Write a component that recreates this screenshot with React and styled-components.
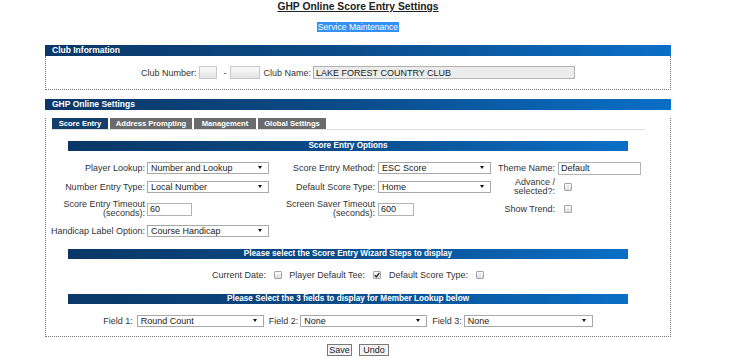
import React from "react";
import styled, { createGlobalStyle } from "styled-components";

// base page styles
const GlobalStyle = createGlobalStyle`
  body {
    margin: 0;
    background: #fff;
    font-family: "Liberation Sans", Arial, sans-serif;
    color: #333;
  }
`;

const FONT = `"Liberation Sans", Arial, sans-serif`;
const BAR = "linear-gradient(to right, #0a3766 0%, #0b4a86 45%, #0a6fc7 100%)";

const Page = styled.div`
  width: 626px;
  margin-left: 45px;
  padding-top: 1px;
`;

const Title = styled.h1`
  margin: 0;
  text-align: center;
  font-size: 10.3px;
  line-height: 12px;
  font-weight: bold;
  text-decoration: underline;
  color: #222;
`;

const ServiceRow = styled.div`
  display: flex;
  justify-content: center;
  margin-top: 9px;
`;

const Highlight = styled.span`
  display: inline-block;
  padding: 0 1px;
  font-size: 8.6px;
  line-height: 10px;
  color: #fff;
  background: #3390f5;
`;

// section (Club Information / GHP Online Settings)
const Section = styled.section`
  margin-top: ${(p) => p.$top}px;
`;

const SectionHeader = styled.div`
  height: 11px;
  line-height: 11px;
  padding-left: 7px;
  background: ${BAR};
  color: #fff;
  font-size: 8.5px;
  font-weight: bold;
`;

const SectionBody = styled.div`
  border: 1px dotted #777;
  border-top: none;
  padding-bottom: ${(p) => p.$pb || 0}px;
`;

const ClubRow = styled.div`
  height: 33px;
  display: flex;
  align-items: center;
  justify-content: center;
  font-size: 9px;
`;

const Text = styled.span`
  font-size: 9px;
  line-height: 10px;
  color: #333;
  margin: ${(p) => p.$m || "0"};
  white-space: nowrap;
`;

const TextInput = styled.input`
  display: block;
  box-sizing: border-box;
  width: ${(p) => p.$w}px;
  height: 13px;
  margin: ${(p) => p.$m || "0"};
  padding: 0 2px;
  border: 1px solid ${(p) => (p.$shade ? "#c8c8c8" : "#b3b3b3")};
  background: ${(p) =>
    p.$shade ? "linear-gradient(#fbfbfb, #e4e4e4)" : p.$bg || "#fff"};
  font-family: ${FONT};
  font-size: 9px;
  line-height: 11px;
  color: #222;
  outline: none;
  justify-self: start;
  align-self: center;
`;

// tabs
const Tabs = styled.div`
  display: flex;
  gap: 2px;
  margin: 8px 25px 0 6px;
  border-bottom: 1px solid #dcdcdc;
  height: 11px;
`;

const Tab = styled.div`
  width: ${(p) => p.$w}px;
  height: 11px;
  line-height: 11px;
  text-align: center;
  font-size: 7.6px;
  font-weight: bold;
  color: #fff;
  background: ${(p) => (p.$active ? "#133f6c" : "#6b6b6b")};
  white-space: nowrap;
`;

const Block = styled.div`
  width: 560px;
  margin: 11px 0 0 22px;
`;

const SubBar = styled.div`
  height: 10px;
  line-height: 10px;
  margin-top: ${(p) => p.$top || 0}px;
  background: ${BAR};
  color: #fff;
  font-size: 8.2px;
  font-weight: bold;
  text-align: center;
  white-space: nowrap;
`;

const OptionsGrid = styled.div`
  display: grid;
  grid-template-columns: 79px 122px 109px 113px 67px 83px;
  grid-template-rows: 12px 12px 18px 12px;
  row-gap: 7px;
  margin-top: 11px;
  width: 573px;
`;

const Label = styled.label`
  justify-self: end;
  align-self: center;
  text-align: right;
  padding-right: ${(p) => p.$pr ?? 2}px;
  font-size: 9px;
  line-height: 9px;
  color: #333;
  white-space: nowrap;
`;

const SelectWrap = styled.span`
  position: relative;
  display: block;
  flex: none;
  width: ${(p) => p.$w}px;
  height: 12px;
  margin: ${(p) => p.$m || "0"};
  justify-self: start;
  align-self: center;

  &::after {
    content: "";
    position: absolute;
    right: 7px;
    top: 4px;
    border-left: 2px solid transparent;
    border-right: 2px solid transparent;
    border-top: 3px solid #111;
    pointer-events: none;
  }
`;

const SelectBox = styled.select`
  display: block;
  appearance: none;
  box-sizing: border-box;
  width: 100%;
  height: 12px;
  margin: 0;
  padding: 0 0 0 3px;
  border: 1px solid #a9a9a9;
  border-radius: 0;
  background: #fff;
  font-family: ${FONT};
  font-size: 9px;
  line-height: 10px;
  color: #222;
  outline: none;
`;

const Select = ({ w, m, value }) => (
  <SelectWrap $w={w} $m={m}>
    <SelectBox defaultValue={value}>
      <option>{value}</option>
    </SelectBox>
  </SelectWrap>
);

const Box = styled.span`
  position: relative;
  display: inline-flex;
  align-items: center;
  justify-content: center;
  box-sizing: border-box;
  width: 8px;
  height: 8px;
  margin: ${(p) => p.$m || "0"};
  border: 1px solid #a6a6a6;
  border-radius: 1px;
  background: linear-gradient(#fcfcfc, #dcdcdc);
  justify-self: start;
  align-self: center;
`;

const Check = ({ checked, m }) => (
  <Box $m={m}>
    {checked && (
      <svg width="6" height="6" viewBox="0 0 6 6">
        <path d="M0.8 3.2 L2.4 4.8 L5.3 1" fill="none" stroke="#222" strokeWidth="1.3" />
      </svg>
    )}
  </Box>
);

const InlineRow = styled.div`
  display: flex;
  align-items: center;
  justify-content: center;
  height: 12px;
  margin-top: ${(p) => p.$top}px;
`;

const Buttons = styled.div`
  display: flex;
  justify-content: center;
  gap: 7px;
  margin-top: 7px;
`;

const Button = styled.button`
  box-sizing: border-box;
  width: ${(p) => p.$w}px;
  height: 12px;
  padding: 0;
  border: 1px solid #7a7a7a;
  background: #f3f3f3;
  font-family: ${FONT};
  font-size: 9px;
  line-height: 10px;
  color: #222;
`;

export default function App() {
  return (
    <>
      <GlobalStyle />
      <Page>
        <Title>GHP Online Score Entry Settings</Title>
        <ServiceRow>
          <Highlight>Service Maintenance</Highlight>
        </ServiceRow>

        <Section $top={13}>
          <SectionHeader>Club Information</SectionHeader>
          <SectionBody>
            <ClubRow>
              <Text $m="0 2px 0 0">Club Number:</Text>
              <TextInput $w={18} $shade />
              <Text $m="0 3px 0 7px">-</Text>
              <TextInput $w={30} $shade />
              <Text $m="0 2px 0 4px">Club Name:</Text>
              <TextInput $w={262} $bg="#ececec" defaultValue="LAKE FOREST COUNTRY CLUB" />
            </ClubRow>
          </SectionBody>
        </Section>

        <Section $top={9}>
          <SectionHeader>GHP Online Settings</SectionHeader>
          <SectionBody $pb={9}>
            <Tabs>
              <Tab $w={56} $active>Score Entry</Tab>
              <Tab $w={82}>Address Prompting</Tab>
              <Tab $w={62}>Management</Tab>
              <Tab $w={68}>Global Settings</Tab>
            </Tabs>

            <Block>
              <SubBar>Score Entry Options</SubBar>
              <OptionsGrid>
                <Label>Player Lookup:</Label>
                <Select w={122} value="Number and Lookup" />
                <Label $pr={3}>Score Entry Method:</Label>
                <Select w={113} value="ESC Score" />
                <Label $pr={3}>Theme Name:</Label>
                <TextInput $w={83} defaultValue="Default" />

                <Label>Number Entry Type:</Label>
                <Select w={122} value="Local Number" />
                <Label $pr={3}>Default Score Type:</Label>
                <Select w={113} value="Home" />
                <Label $pr={3}>
                  Advance /<br />
                  selected?:
                </Label>
                <Check m="0 0 0 6px" />

                <Label>
                  Score Entry Timeout
                  <br />
                  (seconds):
                </Label>
                <TextInput $w={45} defaultValue="60" />
                <Label $pr={3}>
                  Screen Saver Timeout
                  <br />
                  (seconds):
                </Label>
                <TextInput $w={36} defaultValue="600" />
                <Label $pr={3}>Show Trend:</Label>
                <Check m="0 0 0 6px" />

                <Label>Handicap Label Option:</Label>
                <Select w={122} value="Course Handicap" />
              </OptionsGrid>

              <SubBar $top={12}>Please select the Score Entry Wizard Steps to display</SubBar>
              <InlineRow $top={10}>
                <Text>Current Date:</Text>
                <Check m="0 7px 0 8px" />
                <Text>Player Default Tee:</Text>
                <Check checked m="0 8px 0 8px" />
                <Text>Default Score Type:</Text>
                <Check m="0 0 0 8px" />
              </InlineRow>

              <SubBar $top={13}>Please Select the 3 fields to display for Member Lookup below</SubBar>
              <InlineRow $top={11}>
                <Text $m="0 4px 0 0">Field 1:</Text>
                <Select w={127} value="Round Count" />
                <Text $m="0 2px 0 5px">Field 2:</Text>
                <Select w={127} value="None" />
                <Text $m="0 2px 0 5px">Field 3:</Text>
                <Select w={129} value="None" />
              </InlineRow>
            </Block>
          </SectionBody>
        </Section>

        <Buttons>
          <Button $w={25}>Save</Button>
          <Button $w={30}>Undo</Button>
        </Buttons>
      </Page>
    </>
  );
}
